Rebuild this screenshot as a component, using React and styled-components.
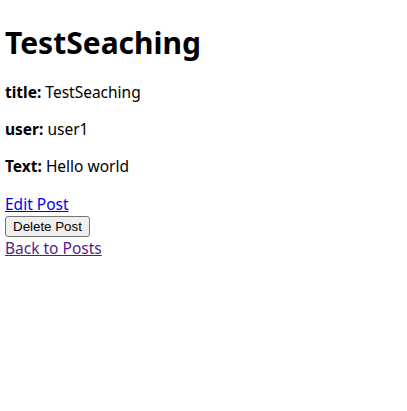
import React from "react";
import styled, { createGlobalStyle } from "styled-components";

const GlobalStyle = createGlobalStyle`
  body {
    margin: 5px;
    background: #fff;
    color: #000;
    font-family: "Noto Sans", "Noto Sans CJK KR", sans-serif;
  }
`;

const Page = styled.div`
  display: flex;
  flex-direction: column;
  align-items: flex-start;
`;

const Title = styled.h1`
  margin: 16px 0 18px;
  font-size: 30px;
  line-height: 43px;
  font-weight: 700;
`;

const Field = styled.p`
  margin: 0 0 16px;
  font-size: 15.5px;
  line-height: 21px;
  strong {
    font-weight: 700;
  }
`;

const PostLink = styled.a`
  font-size: 15.5px;
  line-height: 22px;
  color: ${(p) => (p.$visited ? "#551a8b" : "#0000ee")};
  text-decoration: underline;
  cursor: pointer;
`;

const Button = styled.button`
  font-family: "Liberation Sans", Arial, sans-serif;
  font-size: 13.33px;
  height: 21px;
  margin-top: 1px;
  padding: 1px 7px;
  background: #efefef;
  color: #000;
  border: 1px solid #767676;
  border-radius: 3px;
`;

export default function App() {
  const post = { title: "TestSeaching", user: "user1", text: "Hello world" };
  return (
    <>
      <GlobalStyle />
      <Page>
        <Title>{post.title}</Title>
        <Field>
          <strong>title:</strong> {post.title}
        </Field>
        <Field>
          <strong>user:</strong> {post.user}
        </Field>
        <Field>
          <strong>Text:</strong> {post.text}
        </Field>
        <PostLink href="#edit">Edit Post</PostLink>
        <Button>Delete Post</Button>
        <PostLink href="#posts" $visited>
          Back to Posts
        </PostLink>
      </Page>
    </>
  );
}
